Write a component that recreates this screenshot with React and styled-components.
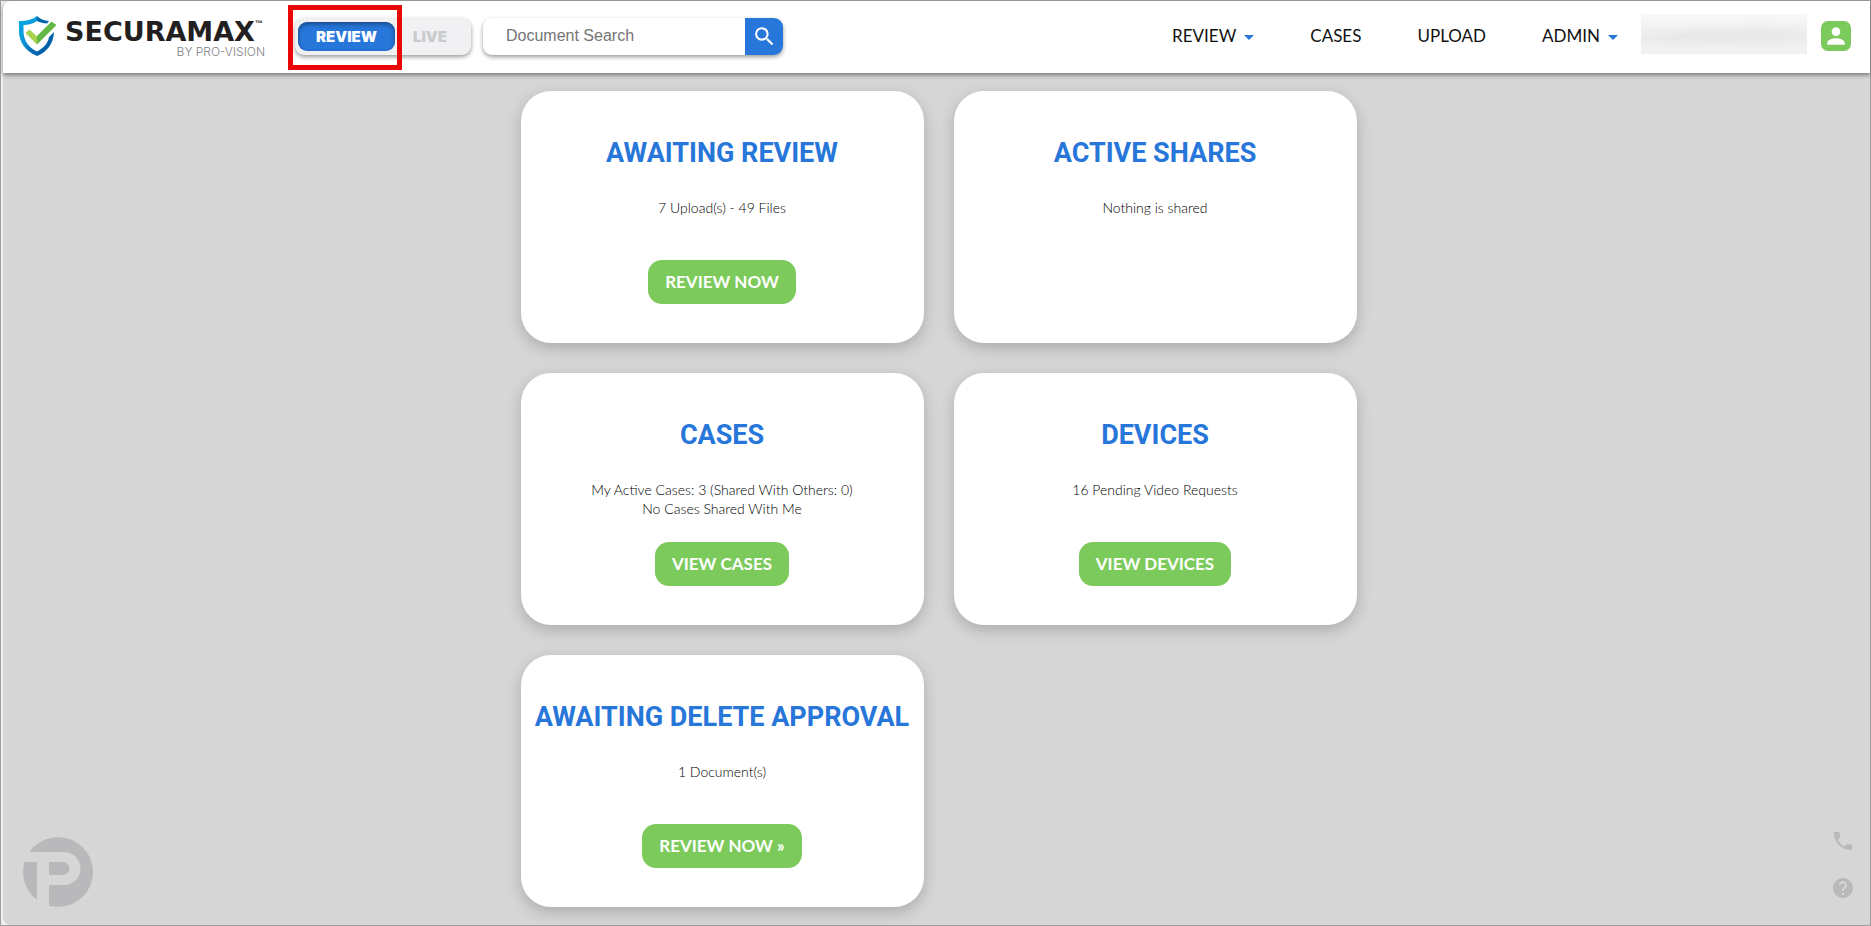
import React from "react";
import styled, { createGlobalStyle } from "styled-components";
import { MdSearch, MdPerson, MdPhone, MdHelp } from "react-icons/md";

const blue = "#2776d9";
const green = "#7dca5c";
const grey = "#b9b9bb";

const GlobalStyle = createGlobalStyle`
  *, *::before, *::after { box-sizing: border-box; }
  body { margin: 0; background: #d6d6d6; font-family: Lato, "Gill Sans", sans-serif; color: #111; }
  button, input { font: inherit; border: 0; margin: 0; }
  button { cursor: pointer; }
  a { color: inherit; text-decoration: none; }
`;

const Page = styled.div`
  position: relative;
  display: flex;
  flex-direction: column;
  min-height: 100vh;
  border: 1px solid #9f9fa0;
  background: #efefef;
  padding-left: 2px;
`;

const Header = styled.header`
  position: relative;
  z-index: 1;
  display: flex;
  align-items: center;
  height: 72px;
  padding: 0 19px 2px 16px;
  background: #fff;
  border-top-left-radius: 8px;
  box-shadow: 0 2px 4px rgba(0, 0, 0, 0.45);
`;

const Brand = styled.a`
  display: flex;
  align-items: center;
  gap: 8px;
  width: 276px;
  flex-shrink: 0;
`;

const Wordmark = styled.span`
  display: flex;
  flex-direction: column;
  gap: 2px;
  width: 200px;
  padding-top: 6px;
`;

const BrandName = styled.span`
  display: flex;
  font: 700 27px/24px "DejaVu Sans", sans-serif;
  color: #231f20;
`;

const Trademark = styled.sup`
  font: 700 8px/8px "Liberation Sans", sans-serif;
`;

const BrandBy = styled.span`
  align-self: flex-end;
  font: 300 12px/12px Inter, sans-serif;
  color: #808285;
`;

const ModeSwitch = styled.div`
  display: flex;
  align-items: center;
  width: 176px;
  height: 37px;
  padding: 0 3px;
  flex-shrink: 0;
  border-radius: 9px;
  background: #f1f1f3;
  box-shadow: 0 2px 4px rgba(0, 0, 0, 0.4);
`;

const ModeButton = styled.button`
  position: relative;
  width: ${(p) => (p.$active ? "97px" : "70px")};
  height: 29px;
  padding: 0;
  border-radius: 9px;
  background: ${(p) => (p.$active ? blue : "transparent")};
  box-shadow: ${(p) => (p.$active ? "inset 0 2px 4px rgba(0, 0, 0, 0.4)" : "none")};
  color: ${(p) => (p.$active ? "#fff" : "#c9cacc")};
  font: 900 15px/29px Inter, "Arial Black", sans-serif;
`;

const Highlight = styled.span`
  position: absolute;
  inset: -17px -7px -19px -10px;
  border: 5px solid #ea0606;
  pointer-events: none;
`;

const Search = styled.form`
  display: flex;
  width: 300px;
  height: 37px;
  margin-left: 12px;
  flex-shrink: 1;
  border-radius: 9px;
  overflow: hidden;
  background: #fff;
  box-shadow: 0 2px 4px rgba(0, 0, 0, 0.4);
`;

const SearchInput = styled.input`
  flex: 1;
  min-width: 0;
  padding: 0 23px;
  background: transparent;
  font: 16px/20px "Liberation Sans", Arial, sans-serif;
  outline: none;
  &::placeholder { color: #757575; opacity: 1; }
`;

const SearchButton = styled.button`
  display: flex;
  align-items: center;
  justify-content: center;
  width: 38px;
  padding: 0;
  background: ${blue};
  color: #fff;
`;

const Nav = styled.nav`
  display: flex;
  align-items: center;
  gap: 56px;
  margin-left: auto;
  font-size: 17px;
  line-height: 20px;
`;

const NavLink = styled.a`
  display: flex;
  align-items: center;
  gap: 8px;
`;

const Caret = styled.span`
  margin-top: 2px;
  border: 5px solid transparent;
  border-top-color: ${blue};
  border-bottom: 0;
`;

const UserName = styled.div`
  width: 166px;
  height: 40px;
  margin: 0 14px 4px 23px;
  flex-shrink: 0;
  background:
    radial-gradient(ellipse at 24% 55%, rgba(0, 0, 0, 0.03), transparent 40%),
    radial-gradient(ellipse at 70% 50%, rgba(0, 0, 0, 0.04), transparent 50%),
    linear-gradient(#f8f8f8, #efefef 60%, #f1f1f1);
`;

const UserButton = styled.button`
  display: flex;
  align-items: center;
  justify-content: center;
  width: 30px;
  height: 30px;
  padding: 0;
  flex-shrink: 0;
  border-radius: 7px;
  background: ${green};
  color: #fff;
`;

const Main = styled.main`
  flex: 1;
  padding: 18px 20px 18px 24px;
  background: #d6d6d6;
  border-bottom-left-radius: 8px;
`;

const CardGrid = styled.div`
  display: grid;
  grid-template-columns: repeat(auto-fit, minmax(388px, 1fr));
  gap: 30px;
  max-width: 836px;
  margin: 0 auto;
`;

const Card = styled.section`
  display: flex;
  flex-direction: column;
  align-items: center;
  min-height: 252px;
  padding: 46px 12px 39px;
  border-radius: 30px;
  background: #fff;
  box-shadow: 0 5px 15px rgba(0, 0, 0, 0.2);
  text-align: center;
`;

const CardTitle = styled.h2`
  margin: 0 0 29px;
  font: 700 27px/32px Roboto, sans-serif;
  color: ${blue};
  white-space: nowrap;
`;

const CardText = styled.p`
  min-height: 62px;
  margin: 0;
  color: #000;
  font-size: 14px;
  font-weight: 300;
  line-height: 19px;
  white-space: pre-line;
`;

const CardButton = styled.button`
  height: 44px;
  padding: 0 17px;
  border-radius: 14px;
  background: ${green};
  color: #fff;
  font-size: 17px;
  font-weight: 700;
  line-height: 20px;
`;

const Watermark = styled.svg`
  position: absolute;
  left: 22px;
  bottom: 18px;
`;

const HelpLinks = styled.div`
  position: absolute;
  right: 15px;
  bottom: 25px;
  display: flex;
  flex-direction: column;
  gap: 23px;
  color: ${grey};
  a { display: flex; }
`;

const cards = [
  { title: "AWAITING REVIEW", text: "7 Upload(s) - 49 Files", action: "REVIEW NOW" },
  { title: "ACTIVE SHARES", text: "Nothing is shared" },
  {
    title: "CASES",
    text: "My Active Cases: 3 (Shared With Others: 0)\nNo Cases Shared With Me",
    action: "VIEW CASES",
  },
  { title: "DEVICES", text: "16 Pending Video Requests", action: "VIEW DEVICES" },
  { title: "AWAITING DELETE APPROVAL", text: "1 Document(s)", action: "REVIEW NOW »" },
];

const navItems = [
  { label: "REVIEW", menu: true },
  { label: "CASES" },
  { label: "UPLOAD" },
  { label: "ADMIN", menu: true },
];

function Shield() {
  return (
    <svg width="38" height="40" viewBox="0 0 38 40" aria-hidden="true">
      <defs>
        <linearGradient id="shieldLeft" x1="0" y1="0" x2="0.6" y2="1">
          <stop offset="0" stopColor="#00a9e6" />
          <stop offset="0.6" stopColor="#0c97da" />
          <stop offset="1" stopColor="#0568b0" />
        </linearGradient>
      </defs>
      <path
        d="M18 0 C13 4 7 5 0 5 V15 C0 26 6 35 18 40 V35.500 C9 31 4.500 24 4.500 15 V9 C10 9 14 7.500 18 5z"
        fill="url(#shieldLeft)"
      />
      <path d="M18 0 C21 3 25 4.500 30 5 L28 7.500 C24 7.500 21 6.500 18 5z" fill="#0066ad" />
      <path d="M35 16 C34.500 27 29 35.500 18 40 V35.500 C25 32 29 27 30 21z" fill="#0063aa" />
      <path d="M18 20 L32.500 5.500 L37.500 9 L18 28.500 L14.500 25z" fill="#63b946" />
      <path d="M6.500 17 L10.500 13.500 L18 20.500 V28.500z" fill="#a6d24f" />
    </svg>
  );
}

export default function App() {
  return (
    <>
      <GlobalStyle />
      <Page>
        <Header>
          <Brand href="#home">
            <Shield />
            <Wordmark>
              <BrandName>
                SECURAMAX<Trademark>™</Trademark>
              </BrandName>
              <BrandBy>BY PRO-VISION</BrandBy>
            </Wordmark>
          </Brand>
          <ModeSwitch>
            <ModeButton type="button" $active>
              REVIEW
              <Highlight />
            </ModeButton>
            <ModeButton type="button">LIVE</ModeButton>
          </ModeSwitch>
          <Search role="search">
            <SearchInput type="text" placeholder="Document Search" aria-label="Document Search" />
            <SearchButton type="button" aria-label="Search">
              <MdSearch size={25} />
            </SearchButton>
          </Search>
          <Nav>
            {navItems.map((item) => (
              <NavLink key={item.label} href={`#${item.label.toLowerCase()}`}>
                {item.label}
                {item.menu && <Caret />}
              </NavLink>
            ))}
          </Nav>
          <UserName />
          <UserButton type="button" aria-label="Account">
            <MdPerson size={26} />
          </UserButton>
        </Header>
        <Main>
          <CardGrid>
            {cards.map((card) => (
              <Card key={card.title}>
                <CardTitle>{card.title}</CardTitle>
                <CardText>{card.text}</CardText>
                {card.action && <CardButton type="button">{card.action}</CardButton>}
              </Card>
            ))}
          </CardGrid>
        </Main>
        <Watermark width="70" height="70" viewBox="0 0 70 70" aria-hidden="true">
          <circle cx="35" cy="35" r="35" fill={grey} />
          <path d="M0 15 H41 a16 16 0 0 1 0 33 H26 V70 H14 V25 H0z" fill="#d6d6d6" />
          <path d="M26 25 h14 a6 6 0 0 1 0 13 h-14z" fill={grey} />
        </Watermark>
        <HelpLinks>
          <a href="#phone" aria-label="Call support">
            <MdPhone size={24} />
          </a>
          <a href="#help" aria-label="Help">
            <MdHelp size={24} />
          </a>
        </HelpLinks>
      </Page>
    </>
  );
}
